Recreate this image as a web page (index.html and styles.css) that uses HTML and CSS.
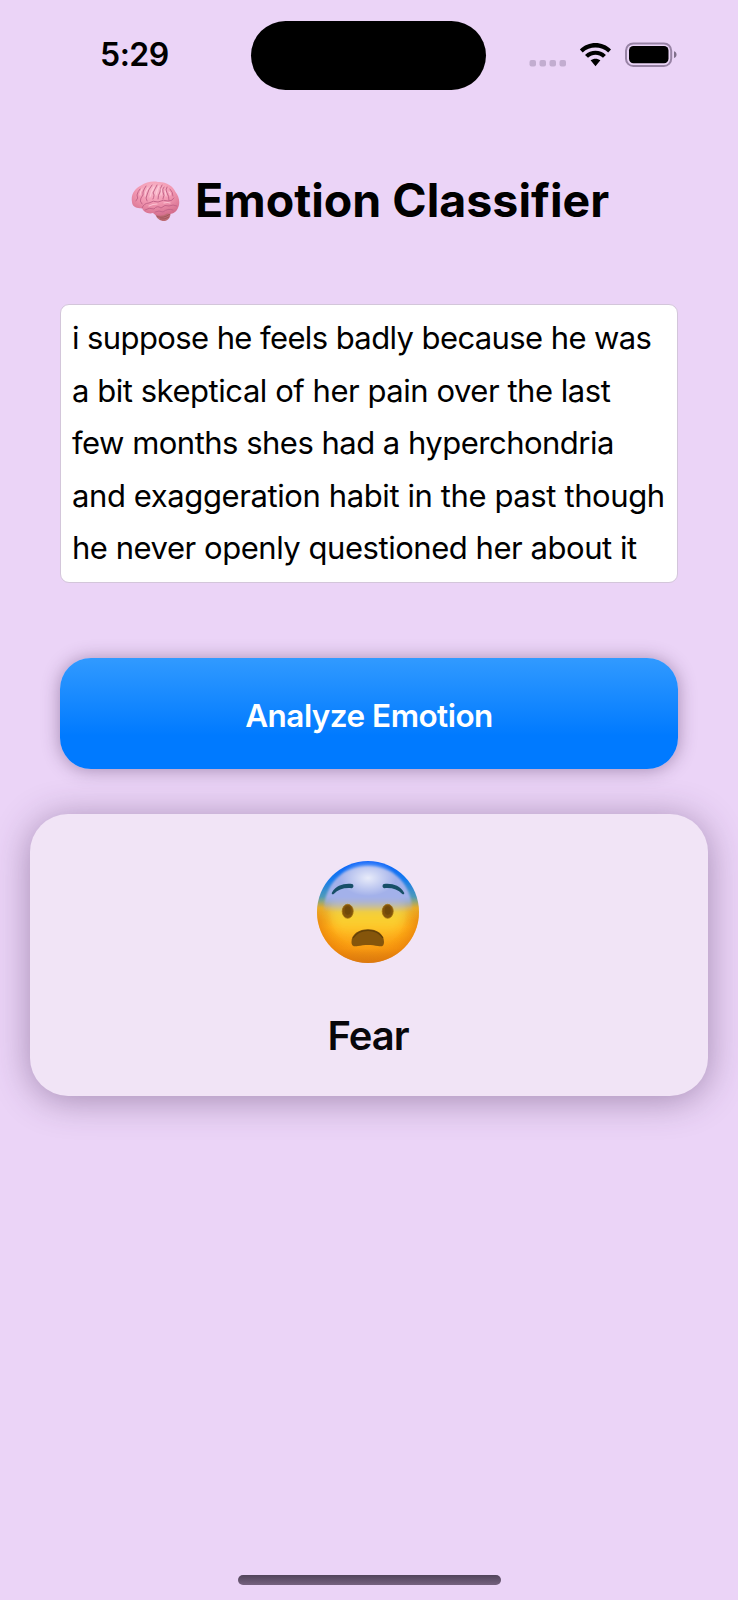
FILE: index.html
```html
<!DOCTYPE html>
<html lang="en">
<head>
<meta charset="utf-8">
<title>Emotion Classifier</title>
<link rel="stylesheet" href="styles.css">
</head>
<body>
<div class="screen">
  <header class="status">
    <div class="time">5:29</div>
    <div class="island"></div>
    <svg class="signals" width="150" height="30" viewBox="528 40 150 30">
      <g fill="#c2add0">
        <rect x="529.5" y="60" width="6.5" height="6.5" rx="2"/>
        <rect x="539.5" y="60" width="6.5" height="6.5" rx="2"/>
        <rect x="549.5" y="60" width="6.5" height="6.5" rx="2"/>
        <rect x="559.5" y="60" width="6.5" height="6.5" rx="2"/>
      </g>
      <path d="M579.9 49.6C588 40.9 602.900 40.9 611 49.600L608.200 52.500C601.500 45.700 589.400 45.700 582.700 52.500ZM585 54.900C591 49.300 600 49.300 605.900 54.900L603 57.800C598.600 53.700 592.400 53.700 588 57.800ZM590.600 60.300C593.500 58.200 597.500 58.200 600.400 60.300L595.500 66.200Z"/>
      <rect x="626" y="43.400" width="45.200" height="22.600" rx="7.300" fill="none" stroke="#9883a5" stroke-width="2"/>
      <rect x="629" y="46" width="39.500" height="17.200" rx="4.500"/>
      <path d="M674 51.200C677.400 52.200 677.400 57 674 58Z" fill="#806f8b"/>
    </svg>
  </header>

  <main class="content">
    <h1 class="title">
      <svg class="brain" width="49" height="41" viewBox="0 0 49 41">
        <defs>
          <radialGradient id="pink" cx=".48" cy=".25" r=".75">
            <stop offset="0" stop-color="#f9bccd"/>
            <stop offset=".5" stop-color="#f298b2"/>
            <stop offset="1" stop-color="#d56f8e"/>
          </radialGradient>
        </defs>
        <path d="M24 32C25 38 30 40.500 34 40C38 39 40 35 39.500 31Z" fill="#bd6c73"/>
        <path d="M26 35.500Q32 38 39 33M29 38Q34 38.500 38 36" fill="none" stroke="#914650" stroke-width=".6"/>
        <path d="M1 21C-.5 14 4 7 10 4.500C15 .8 22 0 27 1C35 .5 42 5 44.500 11C48 15 49.500 22 47 27C45 31.500 41 34 36 32.500C31 36 25 35 22 32C17 33.500 12 30.500 11 27C6 28 1 25.500 1 21Z" fill="url(#pink)"/>
        <g fill="none" stroke="#c5658a" stroke-width="1" stroke-linecap="round">
          <path d="M11 27Q13 22 18 22Q22 19 27 21Q33 18 37 20Q42 20 43 17M5 20Q8 17 6 14Q7 10 9 8M11 23Q8 20 10 17Q13 14 12 11Q13 8 15 5M16 20Q14 17 16 14Q17 9 21 4M22 18Q24 14 22 12Q24 8 26 4M27 18Q27 14 29 11Q29 7 31 4M32 18Q34 14 32 11Q31 8 33 6M38 19Q38 15 36 12Q34 9 36 6M42 15Q42 11 39 8"/>
          <path d="M14 29Q18 26 23 28Q26 24 30 27Q34 23 38 25Q42 23 46 25M24 31Q28 29 32 31Q37 27 42 29"/>
        </g>
        <g fill="none" stroke="#ffd0dd" stroke-width="1.200" stroke-linecap="round" opacity=".75">
          <path d="M9 14Q9 11 11 8M14 15Q14 11 17 7M19 16Q20 11 23 6M25 14Q26 9 28 5M30 14Q31 10 30 8M35 15Q35 12 34 10M39 14Q40 12 38 11M18 25Q22 23 26 23M33 22Q37 21 39 22"/>
        </g>
      </svg>
      <span class="title-text">Emotion Classifier</span>
    </h1>

    <div class="editor">
      <div class="line l1">i suppose he feels badly because he was</div>
      <div class="line l2">a bit skeptical of her pain over the last</div>
      <div class="line l3">few months shes had a hyperchondria</div>
      <div class="line l4">and exaggeration habit in the past though</div>
      <div class="line l5">he never openly questioned her about it</div>
    </div>

    <button class="analyze">Analyze Emotion</button>

    <section class="result">
      <svg class="face" width="102" height="102" viewBox="0 0 102 102">
        <defs>
          <linearGradient id="skin" x1="0" y1="0" x2="0" y2="1">
            <stop offset="0" stop-color="#0b62fa"/>
            <stop offset=".18" stop-color="#1179ee"/>
            <stop offset=".35" stop-color="#4b9aba"/>
            <stop offset=".46" stop-color="#e8b52f"/>
            <stop offset=".65" stop-color="#ffb01b"/>
            <stop offset=".86" stop-color="#f99a12"/>
            <stop offset="1" stop-color="#cf7415"/>
          </linearGradient>
          <linearGradient id="glow" x1="0" y1="0" x2="0" y2="1">
            <stop offset="0" stop-color="#a3b3f8"/>
            <stop offset=".3" stop-color="#a7b3eb"/>
            <stop offset=".4" stop-color="#b3b6a5"/>
            <stop offset=".52" stop-color="#f2cf38"/>
            <stop offset=".7" stop-color="#fcd02e"/>
            <stop offset="1" stop-color="#ffb822" stop-opacity="0"/>
          </linearGradient>
          <radialGradient id="shine">
            <stop offset="0" stop-color="#fff" stop-opacity=".75"/>
            <stop offset="1" stop-color="#fff" stop-opacity="0"/>
          </radialGradient>
          <radialGradient id="edge">
            <stop offset=".72" stop-color="#ef8900" stop-opacity="0"/>
            <stop offset="1" stop-color="#e57c09" stop-opacity=".65"/>
          </radialGradient>
          <linearGradient id="fade" x1="0" y1="0" x2="0" y2="1">
            <stop offset=".4" stop-color="#000"/>
            <stop offset=".58" stop-color="#fff"/>
          </linearGradient>
          <linearGradient id="upper" x1="0" y1="0" x2="0" y2="1">
            <stop offset=".35" stop-color="#fff"/>
            <stop offset=".5" stop-color="#000"/>
          </linearGradient>
          <mask id="lower"><rect width="102" height="102" fill="url(#fade)"/></mask>
          <mask id="top"><rect width="102" height="102" fill="url(#upper)"/></mask>
          <filter id="soft"><feGaussianBlur stdDeviation="1.200"/></filter>
          <filter id="wide" x="-20%" y="-20%" width="140%" height="140%"><feGaussianBlur stdDeviation="5"/></filter>
        </defs>
        <circle cx="51" cy="51" r="51" fill="url(#skin)"/>
        <path d="M51 10C76 10 88 28 89 45C89 65 76 80 51 84C26 80 13 65 13 45C14 28 26 10 51 10Z" fill="url(#glow)" filter="url(#wide)"/>
        <path d="M51 5C75 5 92 21 95 45L95 52H7L7 45C10 21 27 5 51 5Z" fill="#a3b1ea" filter="url(#soft)" mask="url(#top)"/>
        <circle cx="51" cy="51" r="51" fill="url(#edge)" mask="url(#lower)"/>
        <ellipse cx="51" cy="17" rx="28" ry="18" fill="url(#shine)"/>
        <g fill="#174f67">
          <path d="M15 31.500C19 24.500 27 22 35 23C37 23.500 37 27 34.500 27.200C27 26.500 21 28.500 17 32.800C15.500 34 14.200 33 15 31.500Z"/>
          <path d="M87 31.500C83 24.500 75 22 67 23C65 23.500 65 27 67.500 27.200C75 26.500 81 28.500 85 32.800C86.500 34 87.800 33 87 31.500Z"/>
        </g>
        <g fill="#80530b" stroke="#a3720f" stroke-width=".8">
          <ellipse cx="30.700" cy="50.300" rx="5.500" ry="7"/>
          <ellipse cx="70.700" cy="50.300" rx="5.500" ry="7"/>
        </g>
        <g fill="#704909">
          <ellipse cx="30.700" cy="49.500" rx="3" ry="4.200"/>
          <ellipse cx="70.700" cy="49.500" rx="3" ry="4.200"/>
        </g>
        <path d="M34.500 81C34.500 73 42 68.300 51 68.300C60 68.300 67 73 67 81C67 85.500 64.500 85.800 61 85C55 83.500 47 83.500 41 85C37.500 85.800 34.500 85.500 34.500 81Z" fill="#85550b"/>
        <path d="M36 77Q41 69.300 51 69.300Q61 69.300 66 77" fill="none" stroke="#614008" stroke-width="1.200"/>
      </svg>
      <div class="emotion">Fear</div>
    </section>
  </main>
  <div class="home"></div>
</div>
</body>
</html>
```
FILE: styles.css
```css
* { box-sizing: border-box; }
body { margin: 0; background: #ebd4f7; font-family: Inter, "Liberation Sans", sans-serif; color: #000; }
.screen { width: 738px; height: 1600px; display: flex; flex-direction: column; align-items: center; overflow: hidden; background: #ebd4f7; }
.status { width: 738px; height: 90px; padding-top: 21px; display: grid; grid-template-columns: 251px 235px 1fr; flex: none; }
.time { font-size: 32px; font-weight: 600; line-height: 68px; padding-left: 100px; white-space: nowrap; letter-spacing: -.5px; }
.island { height: 69px; border-radius: 34.5px; background: #000; }
.signals { margin: 19px 0 0 42px; }
.content { flex: 1; width: 678px; display: flex; flex-direction: column; align-items: center; }
.title { width: 100%; height: 60px; margin: 80px 0 0; padding-left: 101px; display: flex; line-height: 60px; font-size: 46.500px; font-weight: 700; white-space: nowrap; }
.brain { flex: none; margin: 11px 15px 0 0; }
.title-text { letter-spacing: 0; }
.editor { width: 618px; height: 279px; margin-top: 74px; padding: 7px 0 0 11px; background: #fff; border: 1px solid #d3c6da; border-radius: 9px; flex: none; }
.line { height: 52.600px; line-height: 52.600px; font-size: 31px; white-space: nowrap; }
.l1 { letter-spacing: -.6px; }
.l2 { letter-spacing: -.46px; }
.l3 { letter-spacing: -.51px; }
.l4 { letter-spacing: -.4px; }
.l5 { letter-spacing: -.46px; }
.analyze { width: 618px; height: 111px; margin: 75px 0 0; padding: 4px 0 0; border: 0; border-radius: 31px; flex: none; background: linear-gradient(#319aff 0, #007aff 70%); box-shadow: 0 1px 18px rgba(65, 35, 80, .42); color: #fff; font: 600 31.500px Inter, sans-serif; letter-spacing: -.53px; }
.result { width: 678px; height: 282px; margin-top: 45px; padding-top: 47px; display: flex; flex-direction: column; align-items: center; border-radius: 38px; flex: none; background: #f1e4f6; box-shadow: 0 4px 36px rgba(65, 35, 80, .42); }
.face { flex: none; margin-right: 2px; }
.emotion { margin: 48px 2px 0 0; font-size: 40px; line-height: 50px; font-weight: 600; color: #08070a; letter-spacing: -1px; }
.home { width: 263px; height: 10px; margin-bottom: 15px; border-radius: 5px; flex: none; background: linear-gradient(#51445a, #75627f); }
```
